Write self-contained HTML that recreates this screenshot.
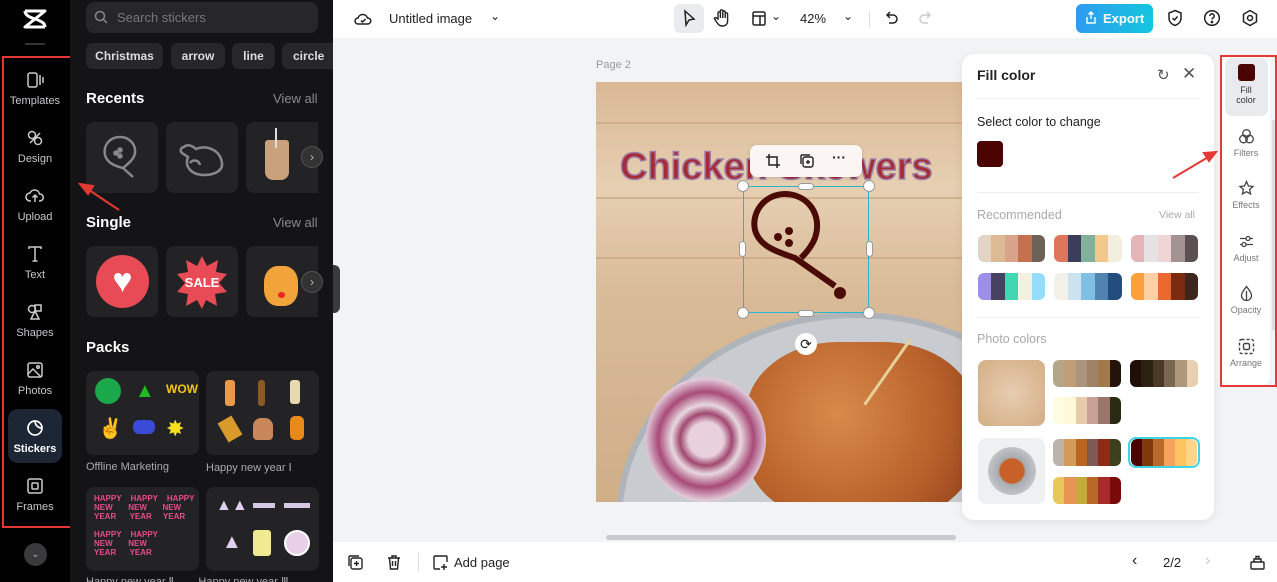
<!DOCTYPE html><html><head><meta charset="utf-8"><style>
*{box-sizing:border-box;margin:0;padding:0}
html{width:1277px;height:582px;overflow:hidden}
body{width:1277px;height:582px;overflow:hidden;position:relative;background:#f1f3f5;font-family:"Liberation Sans",sans-serif}
.abs{position:absolute}
.rail{left:0;top:0;width:70px;height:582px;background:#000}
.ri{position:absolute;left:8px;width:54px;text-align:center;color:#c8c8cc;font-size:11px}
.ri svg{display:block;margin:0 auto 5px}
.panel{left:70px;top:0;width:263px;height:582px;background:#141416;overflow:hidden}
.card{position:absolute;background:#232326;border-radius:8px}
.chip{position:absolute;top:43px;height:26px;background:#27272a;border-radius:7px;color:#ddd;font-size:12px;font-weight:bold;line-height:26px;text-align:center}
.h{position:absolute;color:#fff;font-weight:bold;font-size:15px}
.va{position:absolute;color:#8a8a8e;font-size:13px}
.pal{position:absolute;height:27px;border-radius:6px;overflow:hidden;display:flex}
.pal i{flex:1}
.rr{position:absolute;left:1226px;width:40px;text-align:center;color:#777;font-size:9px;line-height:10px}
.rr svg{display:block;margin:0 auto 3px}
</style></head><body>
<div class="abs rail"></div>
<svg class="abs" style="left:22px;top:8px" width="26" height="22" viewBox="0 0 26 22" fill="none" stroke="#fff" stroke-width="3" stroke-linejoin="round"><path d="M3 3h20L3 19h20M3 3c0 4 4 6 10 8M23 19c0-4-4-6-10-8"/></svg>
<div class="abs" style="left:25px;top:43px;width:20px;height:2px;background:#333"></div>
<div class="abs" style="left:2px;top:56px;width:70px;height:472px;border:2px solid #e53935"></div>
<div class="ri" style="top:70px"><svg width="20" height="20" viewBox="0 0 20 20" fill="none" stroke="#ccc" stroke-width="1.5"><rect x="3" y="3" width="9" height="14" rx="2"/><path d="M15 5v10M18 7v6"/></svg>Templates</div>
<div class="ri" style="top:128px"><svg width="20" height="20" viewBox="0 0 20 20" fill="none" stroke="#ccc" stroke-width="1.5"><circle cx="7" cy="7" r="3.5"/><circle cx="13" cy="13" r="3.5"/><path d="M5 15l10-10"/></svg>Design</div>
<div class="ri" style="top:186px"><svg width="20" height="20" viewBox="0 0 20 20" fill="none" stroke="#ccc" stroke-width="1.5"><path d="M6 15H5a4 4 0 010-8 5 5 0 019.5 1A3.5 3.5 0 0115 15h-1M10 16V9M7.5 11.5L10 9l2.5 2.5"/></svg>Upload</div>
<div class="ri" style="top:244px"><svg width="20" height="20" viewBox="0 0 20 20" fill="none" stroke="#ccc" stroke-width="1.5"><path d="M4 5V3h12v2M10 3v14M7.5 17h5"/></svg>Text</div>
<div class="ri" style="top:302px"><svg width="20" height="20" viewBox="0 0 20 20" fill="none" stroke="#ccc" stroke-width="1.5"><circle cx="7" cy="7" r="3.5"/><rect x="10" y="3" width="6" height="6"/><path d="M10 9l4 8H6z"/></svg>Shapes</div>
<div class="ri" style="top:360px"><svg width="20" height="20" viewBox="0 0 20 20" fill="none" stroke="#ccc" stroke-width="1.5"><rect x="3" y="3" width="14" height="14" rx="2"/><path d="M3 14l5-5 8 8"/><circle cx="13" cy="7" r="1.3"/></svg>Photos</div>
<div class="abs" style="left:8px;top:409px;width:54px;height:54px;border-radius:10px;background:#1c2634"></div>
<div class="ri" style="top:418px;color:#fff;font-weight:bold"><svg width="20" height="20" viewBox="0 0 20 20" fill="none" stroke="#fff" stroke-width="1.7"><path d="M17 10A7 7 0 1110 3c0 4 3 7 7 7zM10 3a7 7 0 017 7"/></svg>Stickers</div>
<div class="ri" style="top:476px"><svg width="20" height="20" viewBox="0 0 20 20" fill="none" stroke="#ccc" stroke-width="1.5"><rect x="3" y="3" width="14" height="14" rx="2"/><rect x="7" y="7" width="6" height="6" rx="1"/></svg>Frames</div>
<div class="abs" style="left:24px;top:543px;width:23px;height:23px;border-radius:50%;background:#3a3a3d;color:#aaa;font-size:10px;text-align:center;line-height:23px">⌄</div>

<div class="abs panel">
<div class="abs" style="left:16px;top:2px;width:232px;height:31px;background:#27272a;border-radius:8px;color:#777;font-size:13px;line-height:31px;padding-left:31px">Search stickers</div>
<svg class="abs" style="left:24px;top:10px" width="14" height="14" viewBox="0 0 14 14" fill="none" stroke="#888" stroke-width="1.5"><circle cx="6" cy="6" r="4.5"/><path d="M9.5 9.5L13 13"/></svg>
<div class="chip" style="left:16px;width:77px">Christmas</div>
<div class="chip" style="left:101px;width:54px">arrow</div>
<div class="chip" style="left:162px;width:43px">line</div>
<div class="chip" style="left:212px;width:51px;border-radius:7px 0 0 7px;text-align:left;padding-left:11px;overflow:hidden">circle</div>
<div class="h" style="left:16px;top:90px">Recents</div><div class="va" style="left:203px;top:91px">View all</div>
<div class="card" style="left:16px;top:122px;width:72px;height:71px"></div>
<div class="card" style="left:96px;top:122px;width:72px;height:71px"></div>
<div class="card" style="left:176px;top:122px;width:72px;height:71px;border-radius:8px 0 0 8px"></div>
<svg class="abs" style="left:28px;top:132px" width="50" height="50" viewBox="0 0 50 50" fill="none" stroke="#888" stroke-width="2.5"><path d="M22 5c-10 0-17 8-15 18 2 8 10 11 18 13l10 9"/><path d="M22 5c9 0 16 7 15 16-1 6-6 10-12 15"/><circle cx="18" cy="21" r="1.5" fill="#888"/><circle cx="22" cy="18" r="1.5" fill="#888"/><circle cx="22" cy="24" r="1.5" fill="#888"/></svg>
<svg class="abs" style="left:106px;top:135px" width="54" height="46" viewBox="0 0 54 46" fill="none" stroke="#888" stroke-width="2.5"><path d="M8 12c4-4 10 0 12 2 10-4 24 0 26 14 1 8-8 12-18 12C16 40 8 32 12 22L6 18c-3-3 0-6 2-6z"/><path d="M14 28c3-4 9-3 10 2"/></svg>
<div class="abs" style="left:195px;top:140px;width:24px;height:40px;background:#c9a27c;border-radius:3px 3px 8px 8px"></div>
<div class="abs" style="left:205px;top:128px;width:2px;height:20px;background:#ddd"></div>
<div class="abs" style="left:231px;top:146px;width:22px;height:22px;border-radius:50%;background:#333;border:1px solid #555;color:#bbb;font-size:12px;text-align:center;line-height:20px">›</div>
<div class="h" style="left:16px;top:214px">Single</div><div class="va" style="left:203px;top:215px">View all</div>
<div class="card" style="left:16px;top:246px;width:72px;height:71px"></div>
<div class="card" style="left:96px;top:246px;width:72px;height:71px"></div>
<div class="card" style="left:176px;top:246px;width:72px;height:71px;border-radius:8px 0 0 8px"></div>
<div class="abs" style="left:26px;top:255px;width:53px;height:53px;border-radius:50%;background:#e84b55;color:#fff;font-size:34px;text-align:center;line-height:53px">♥</div>
<svg class="abs" style="left:106px;top:254px" width="52" height="56" viewBox="0 0 52 56"><polygon points="26,2 31,12 42,6 40,18 51,20 43,29 51,38 39,40 41,52 30,46 26,55 21,46 10,52 12,40 1,38 9,29 1,20 12,18 10,6 21,12" fill="#e84b55"/><text x="26" y="33" fill="#fff" font-size="13" font-weight="bold" text-anchor="middle" font-family="Liberation Sans">SALE</text></svg>
<div class="abs" style="left:194px;top:266px;width:34px;height:40px;border-radius:40%;background:#f2a33a"></div>
<div class="abs" style="left:208px;top:292px;width:7px;height:6px;border-radius:50%;background:#e22"></div>
<div class="abs" style="left:231px;top:271px;width:22px;height:22px;border-radius:50%;background:#333;border:1px solid #555;color:#bbb;font-size:12px;text-align:center;line-height:20px">›</div>
<div class="h" style="left:16px;top:339px">Packs</div>
<div class="card" style="left:16px;top:371px;width:113px;height:84px"></div>
<div class="card" style="left:136px;top:371px;width:113px;height:84px"></div>
<div class="abs" style="left:25px;top:378px;width:26px;height:26px;border-radius:50%;background:#1aa84a"></div>
<div class="abs" style="left:65px;top:380px;color:#2b2;font-size:20px">▲</div>
<div class="abs" style="left:96px;top:382px;color:#f5c518;font-size:12px;font-weight:bold">WOW</div>
<div class="abs" style="left:28px;top:416px;color:#fff;font-size:20px">✌</div>
<div class="abs" style="left:63px;top:420px;width:22px;height:14px;background:#3a4bd8;border-radius:6px"></div>
<div class="abs" style="left:96px;top:416px;color:#f5e020;font-size:22px">✸</div>
<div class="abs" style="left:155px;top:380px;width:10px;height:26px;background:#e89a4a;border-radius:3px"></div>
<div class="abs" style="left:188px;top:380px;width:7px;height:26px;background:#8a5a22;border-radius:3px"></div>
<div class="abs" style="left:220px;top:380px;width:10px;height:24px;background:#e8d8b0;border-radius:3px"></div>
<div class="abs" style="left:152px;top:418px;width:16px;height:22px;background:#d89a2a;transform:rotate(-30deg)"></div>
<div class="abs" style="left:183px;top:418px;width:20px;height:22px;background:#c8865a;border-radius:8px 8px 4px 4px"></div>
<div class="abs" style="left:220px;top:416px;width:14px;height:24px;background:#e8891a;border-radius:5px"></div>
<div class="abs" style="left:16px;top:461px;color:#aaa;font-size:11px">Offline Marketing</div>
<div class="abs" style="left:136px;top:461px;color:#aaa;font-size:11px">Happy new year Ⅰ</div>
<div class="card" style="left:16px;top:487px;width:113px;height:84px"></div>
<div class="card" style="left:136px;top:487px;width:113px;height:84px"></div>
<div class="abs" style="left:24px;top:494px;color:#e84b8a;font-size:8px;font-weight:bold;line-height:9px;width:100px">HAPPY&nbsp;&nbsp;&nbsp;&nbsp;HAPPY&nbsp;&nbsp;&nbsp;&nbsp;HAPPY<br>NEW&nbsp;&nbsp;&nbsp;&nbsp;&nbsp;&nbsp;&nbsp;NEW&nbsp;&nbsp;&nbsp;&nbsp;&nbsp;&nbsp;&nbsp;NEW<br>YEAR&nbsp;&nbsp;&nbsp;&nbsp;&nbsp;&nbsp;YEAR&nbsp;&nbsp;&nbsp;&nbsp;&nbsp;YEAR<br><br>HAPPY&nbsp;&nbsp;&nbsp;&nbsp;HAPPY<br>NEW&nbsp;&nbsp;&nbsp;&nbsp;&nbsp;&nbsp;&nbsp;NEW<br>YEAR&nbsp;&nbsp;&nbsp;&nbsp;&nbsp;&nbsp;YEAR</div>
<div class="abs" style="left:146px;top:497px;color:#e0d0f0;font-size:16px">▲▲</div>
<div class="abs" style="left:183px;top:503px;width:22px;height:5px;background:#d8c8e8"></div>
<div class="abs" style="left:214px;top:503px;width:26px;height:5px;background:#d8c8e8"></div>
<div class="abs" style="left:152px;top:531px;color:#e0d0f0;font-size:20px">▲</div>
<div class="abs" style="left:183px;top:530px;width:18px;height:26px;background:#f2ea90;border-radius:3px"></div>
<div class="abs" style="left:214px;top:530px;width:26px;height:26px;border-radius:50%;background:#e8d0e8;border:2px solid #fff"></div>
<div class="abs" style="left:16px;top:576px;width:240px;height:6px;overflow:hidden;color:#aaa;font-size:11px;line-height:13px">Happy new year Ⅱ&nbsp;&nbsp;&nbsp;&nbsp;&nbsp;&nbsp;&nbsp;&nbsp;Happy new year Ⅲ</div>
</div>
<div class="abs" style="left:333px;top:265px;width:7px;height:48px;background:#3a3a3d;border-radius:0 6px 6px 0"></div>

<!-- top bar -->
<div class="abs" style="left:333px;top:0;width:944px;height:38px;background:#fff"></div>
<svg class="abs" style="left:354px;top:10px" width="18" height="18" viewBox="0 0 18 18" fill="none" stroke="#222" stroke-width="1.5"><path d="M5 14H4a3 3 0 010-6 5 5 0 019.5 0A3 3 0 0114 14H5z"/><path d="M7 10.5l1.5 1.5 3-3"/></svg>
<div class="abs" style="left:389px;top:11px;font-size:13px;color:#222">Untitled image</div>
<div class="abs" style="left:490px;top:9px;font-size:12px;color:#222">⌄</div>
<div class="abs" style="left:674px;top:4px;width:30px;height:29px;border-radius:6px;background:#e9ebee"></div>
<svg class="abs" style="left:681px;top:9px" width="16" height="18" viewBox="0 0 16 18" fill="none" stroke="#222" stroke-width="1.5"><path d="M4 2l9 8-5 1-3 5z"/></svg>
<svg class="abs" style="left:713px;top:8px" width="18" height="20" viewBox="0 0 18 20" fill="none" stroke="#222" stroke-width="1.4"><path d="M5 11V5a1.2 1.2 0 012.4 0v5V3a1.2 1.2 0 012.4 0v7V4a1.2 1.2 0 012.4 0v6V6a1.2 1.2 0 012.4 0v7c0 3-2 5-5 5s-4-1-6-4l-2-3c-.6-1 .8-2 1.6-1z"/></svg>
<svg class="abs" style="left:751px;top:10px" width="16" height="17" viewBox="0 0 16 17" fill="none" stroke="#222" stroke-width="1.5"><rect x="2" y="2" width="12" height="13" rx="1.5"/><path d="M2 6h12M9 6v9"/></svg>
<div class="abs" style="left:771px;top:9px;font-size:12px;color:#222">⌄</div>
<div class="abs" style="left:800px;top:11px;font-size:13px;color:#222">42%</div>
<div class="abs" style="left:843px;top:9px;font-size:12px;color:#222">⌄</div>
<div class="abs" style="left:869px;top:11px;width:1px;height:16px;background:#ddd"></div>
<svg class="abs" style="left:884px;top:10px" width="16" height="17" viewBox="0 0 16 17" fill="none" stroke="#222" stroke-width="1.5"><path d="M6 2L3 5l3 3M3 5h6a4 4 0 010 8H5"/></svg>
<svg class="abs" style="left:917px;top:10px" width="16" height="17" viewBox="0 0 16 17" fill="none" stroke="#ccc" stroke-width="1.5"><path d="M10 2l3 3-3 3M13 5H7a4 4 0 000 8h4"/></svg>
<div class="abs" style="left:1076px;top:4px;width:77px;height:29px;border-radius:6px;background:linear-gradient(90deg,#2e9bef,#14c6df);color:#fff;font-size:13px;font-weight:bold;line-height:29px;padding-left:27px">Export</div>
<svg class="abs" style="left:1085px;top:11px" width="12" height="14" viewBox="0 0 12 14" fill="none" stroke="#fff" stroke-width="1.4"><path d="M6 1v7M3.5 3.5L6 1l2.5 2.5M2 6v6h8V6"/></svg>
<svg class="abs" style="left:1167px;top:9px" width="16" height="18" viewBox="0 0 16 18" fill="none" stroke="#222" stroke-width="1.5"><path d="M8 1.5l6 2.5v5c0 4-3 6.5-6 7.5-3-1-6-3.5-6-7.5V4z"/><path d="M5.5 9l2 2 3-3.5"/></svg>
<svg class="abs" style="left:1203px;top:9px" width="18" height="18" viewBox="0 0 18 18" fill="none" stroke="#222" stroke-width="1.5"><circle cx="9" cy="9" r="7.3"/><path d="M6.8 7a2.2 2.2 0 114 1.3c-.8.6-1.8 1-1.8 2.2"/><circle cx="9" cy="13" r=".6" fill="#222"/></svg>
<svg class="abs" style="left:1241px;top:9px" width="18" height="18" viewBox="0 0 18 18" fill="none" stroke="#222" stroke-width="1.5"><path d="M9 1.5l6.5 3.75v7.5L9 16.5l-6.5-3.75v-7.5z"/><circle cx="9" cy="9" r="2.5"/></svg>

<!-- canvas -->
<div class="abs" style="left:596px;top:59px;font-size:11px;color:#999">Page 2</div>
<div class="abs" style="left:596px;top:82px;width:370px;height:420px;overflow:hidden;background:linear-gradient(180deg,#d9b894 0%,#e6cfb2 25%,#d9bb98 50%,#cfae88 100%)">
 <div class="abs" style="left:0;top:40px;width:370px;height:2px;background:#c9a37c;opacity:.6"></div>
 <div class="abs" style="left:0;top:115px;width:370px;height:2px;background:#c29a70;opacity:.5"></div>
 <div class="abs" style="left:0;top:175px;width:370px;height:2px;background:#c29a70;opacity:.5"></div>
 <div class="abs" style="left:20px;top:230px;width:480px;height:420px;border-radius:50%;background:#c8ccd0;border:6px solid #aeb4ba"></div>
 <div class="abs" style="left:150px;top:260px;width:230px;height:180px;border-radius:40%;background:radial-gradient(circle at 40% 40%,#d88a4a,#b8602a 60%,#8a3a1a)"></div>
 <div class="abs" style="left:50px;top:295px;width:120px;height:125px;border-radius:50%;background:radial-gradient(circle,#e8d0dc 20%,#a04870 30%,#e8d8e0 40%,#a84a78 55%,#e0c8d8 70%)"></div>
 <div class="abs" style="left:290px;top:250px;width:3px;height:80px;background:#e6d098;transform:rotate(35deg)"></div>
 <div class="abs" style="left:24px;top:64px;font-size:38px;font-weight:bold;color:#a82a35;-webkit-text-stroke:1.5px #9c7ea8;white-space:nowrap">Chicken Skewers</div>
</div>
<div class="abs" style="left:743px;top:186px;width:126px;height:127px;border:1.5px solid #22b8cf"></div>
<svg class="abs" style="left:745px;top:190px" width="120" height="120" viewBox="0 0 120 120" fill="none" stroke="#4a0a05" stroke-width="6"><path d="M40 4C20 4 6 22 10 40c4 16 22 22 40 28l40 28"/><path d="M40 4c22 0 38 20 30 44-3 8-8 14-14 20"/><circle cx="33" cy="47" r="4" fill="#4a0a05" stroke="none"/><circle cx="44" cy="41" r="4" fill="#4a0a05" stroke="none"/><circle cx="44" cy="53" r="4" fill="#4a0a05" stroke="none"/><circle cx="95" cy="103" r="6" fill="#4a0a05" stroke="none"/></svg>
<div class="abs" style="left:737px;top:180px;width:12px;height:12px;border-radius:50%;background:#fff;border:1px solid #999"></div>
<div class="abs" style="left:863px;top:180px;width:12px;height:12px;border-radius:50%;background:#fff;border:1px solid #999"></div>
<div class="abs" style="left:737px;top:307px;width:12px;height:12px;border-radius:50%;background:#fff;border:1px solid #999"></div>
<div class="abs" style="left:863px;top:307px;width:12px;height:12px;border-radius:50%;background:#fff;border:1px solid #999"></div>
<div class="abs" style="left:798px;top:183px;width:16px;height:7px;border-radius:4px;background:#fff;border:1px solid #999"></div>
<div class="abs" style="left:798px;top:310px;width:16px;height:7px;border-radius:4px;background:#fff;border:1px solid #999"></div>
<div class="abs" style="left:739px;top:241px;width:7px;height:16px;border-radius:4px;background:#fff;border:1px solid #999"></div>
<div class="abs" style="left:866px;top:241px;width:7px;height:16px;border-radius:4px;background:#fff;border:1px solid #999"></div>
<div class="abs" style="left:795px;top:333px;width:22px;height:22px;border-radius:50%;background:#fff;color:#222;font-size:14px;text-align:center;line-height:22px">⟳</div>
<div class="abs" style="left:750px;top:145px;width:112px;height:32px;border-radius:7px;background:#fbf6f4;box-shadow:0 1px 4px rgba(0,0,0,.15)"></div>
<svg class="abs" style="left:765px;top:153px" width="16" height="16" viewBox="0 0 16 16" fill="none" stroke="#222" stroke-width="1.5"><path d="M4 1v11h11M1 4h11v11"/></svg>
<svg class="abs" style="left:799px;top:153px" width="16" height="16" viewBox="0 0 16 16" fill="none" stroke="#222" stroke-width="1.4"><rect x="4" y="4" width="10" height="10" rx="2"/><path d="M2 11V3a1 1 0 011-1h8M9 7v4M7 9h4"/></svg>
<div class="abs" style="left:832px;top:149px;font-size:14px;font-weight:bold;color:#222">···</div>

<!-- fill color panel -->
<div class="abs" style="left:962px;top:54px;width:252px;height:466px;background:#fff;border-radius:12px;box-shadow:0 2px 10px rgba(0,0,0,.08)"></div>
<div class="abs" style="left:977px;top:67px;font-size:14px;font-weight:bold;color:#222">Fill color</div>
<div class="abs" style="left:1157px;top:66px;font-size:15px;color:#555">↻</div>
<div class="abs" style="left:1182px;top:64px;font-size:17px;color:#555">✕</div>
<div class="abs" style="left:977px;top:98px;width:222px;height:1px;background:#eee"></div>
<div class="abs" style="left:977px;top:115px;font-size:12.5px;color:#222">Select color to change</div>
<div class="abs" style="left:977px;top:141px;width:26px;height:26px;border-radius:4px;background:#4a0503"></div>
<div class="abs" style="left:977px;top:192px;width:222px;height:1px;background:#eee"></div>
<div class="abs" style="left:977px;top:208px;font-size:12.5px;color:#aaa">Recommended</div>
<div class="abs" style="left:1159px;top:209px;font-size:10.5px;color:#aaa">View all</div>
<div class="pal" style="left:978px;top:235px;width:67px"><i style="background:#e3d3c3"></i><i style="background:#dcbb94"></i><i style="background:#d9a38b"></i><i style="background:#c5714f"></i><i style="background:#6e6158"></i></div>
<div class="pal" style="left:1054px;top:235px;width:68px"><i style="background:#df765c"></i><i style="background:#3b3d5b"></i><i style="background:#81b09b"></i><i style="background:#f1c98d"></i><i style="background:#f2efde"></i></div>
<div class="pal" style="left:1131px;top:235px;width:67px"><i style="background:#e5b4b6"></i><i style="background:#e6e2e4"></i><i style="background:#efd5d3"></i><i style="background:#a39392"></i><i style="background:#5c5052"></i></div>
<div class="pal" style="left:978px;top:273px;width:67px"><i style="background:#9d8ee8"></i><i style="background:#474262"></i><i style="background:#41d7b0"></i><i style="background:#f3f0e0"></i><i style="background:#96dcfd"></i></div>
<div class="pal" style="left:1054px;top:273px;width:68px"><i style="background:#f3f0ea"></i><i style="background:#cce2ee"></i><i style="background:#7fbfe3"></i><i style="background:#5283b0"></i><i style="background:#234d7d"></i></div>
<div class="pal" style="left:1131px;top:273px;width:67px"><i style="background:#fba03a"></i><i style="background:#fccfa5"></i><i style="background:#e9692f"></i><i style="background:#7d2b10"></i><i style="background:#3d261c"></i></div>
<div class="abs" style="left:977px;top:317px;width:222px;height:1px;background:#eee"></div>
<div class="abs" style="left:977px;top:332px;font-size:12.5px;color:#aaa">Photo colors</div>
<div class="abs" style="left:978px;top:360px;width:67px;height:66px;border-radius:8px;background:radial-gradient(circle,#e6cdb0,#d4ad84)"></div>
<div class="pal" style="left:1053px;top:360px;width:68px"><i style="background:#b3a787"></i><i style="background:#c19e77"></i><i style="background:#ab957d"></i><i style="background:#9e8166"></i><i style="background:#a07a4b"></i><i style="background:#231308"></i></div>
<div class="pal" style="left:1130px;top:360px;width:68px"><i style="background:#200f08"></i><i style="background:#2c2212"></i><i style="background:#4a3926"></i><i style="background:#786650"></i><i style="background:#ae987c"></i><i style="background:#e8cfb1"></i></div>
<div class="pal" style="left:1053px;top:397px;width:68px"><i style="background:#fffbe0"></i><i style="background:#fff8d8"></i><i style="background:#e7cbac"></i><i style="background:#c9a096"></i><i style="background:#9a766d"></i><i style="background:#282a12"></i></div>
<div class="abs" style="left:978px;top:438px;width:67px;height:66px;border-radius:8px;background:#eef0f2"></div>
<div class="abs" style="left:988px;top:447px;width:48px;height:48px;border-radius:50%;background:radial-gradient(circle,#c8602a 35%,#a8acb0 40%,#c0c4c8 70%)"></div>
<div class="pal" style="left:1053px;top:439px;width:68px"><i style="background:#bcb3ab"></i><i style="background:#d39a5a"></i><i style="background:#ba6522"></i><i style="background:#7e5a55"></i><i style="background:#8f2a17"></i><i style="background:#3e3f1e"></i></div>
<div class="abs" style="left:1128px;top:437px;width:72px;height:31px;border-radius:8px;border:2px solid #3fd3e6"></div>
<div class="pal" style="left:1131px;top:439px;width:66px"><i style="background:#4a0503"></i><i style="background:#7f3a0c"></i><i style="background:#b9692a"></i><i style="background:#f5a25c"></i><i style="background:#fec260"></i><i style="background:#fed68a"></i></div>
<div class="pal" style="left:1053px;top:477px;width:68px"><i style="background:#e8c85a"></i><i style="background:#e69552"></i><i style="background:#c3aa3a"></i><i style="background:#b8692a"></i><i style="background:#a82a2a"></i><i style="background:#7a0a0a"></i></div>

<!-- right rail -->
<div class="abs" style="left:1222px;top:57px;width:48px;height:328px;background:#fff;border-radius:8px"></div>
<div class="abs" style="left:1220px;top:55px;width:57px;height:332px;border:2px solid #e53935"></div>
<div class="abs" style="left:1225px;top:58px;width:43px;height:58px;border-radius:7px;background:#e8eaed"></div>
<div class="rr" style="top:64px;color:#333"><div style="width:17px;height:17px;margin:0 auto 4px;border-radius:3px;background:#4a0503"></div>Fill<br>color</div>
<div class="rr" style="top:128px"><svg width="17" height="17" viewBox="0 0 17 17" fill="none" stroke="#444" stroke-width="1.3"><circle cx="8.5" cy="5.5" r="3.8"/><circle cx="5.5" cy="11" r="3.8"/><circle cx="11.5" cy="11" r="3.8"/></svg>Filters</div>
<div class="rr" style="top:180px"><svg width="17" height="17" viewBox="0 0 17 17" fill="none" stroke="#444" stroke-width="1.3"><path d="M8.5 1.5l2 4.5 4.5.5-3.4 3 1 4.5-4.1-2.3-4.1 2.3 1-4.5-3.4-3 4.5-.5z"/></svg>Effects</div>
<div class="rr" style="top:233px"><svg width="17" height="17" viewBox="0 0 17 17" fill="none" stroke="#444" stroke-width="1.3"><path d="M2 5.5h13M2 11.5h13"/><circle cx="10" cy="5.5" r="2" fill="#fff"/><circle cx="6" cy="11.5" r="2" fill="#fff"/></svg>Adjust</div>
<div class="rr" style="top:285px"><svg width="17" height="17" viewBox="0 0 17 17" fill="none" stroke="#444" stroke-width="1.3"><path d="M8.5 1.5C6 5 3.5 7.5 3.5 10.5a5 5 0 0010 0c0-3-2.5-5.5-5-9z"/><path d="M8.5 6v9"/></svg>Opacity</div>
<div class="rr" style="top:338px"><svg width="17" height="17" viewBox="0 0 17 17" fill="none" stroke="#444" stroke-width="1.4" stroke-dasharray="3 2"><rect x="1.5" y="1.5" width="14" height="14" rx="2"/><rect x="5.5" y="5.5" width="6" height="6" rx="1.5" stroke-dasharray="none"/></svg>Arrange</div>
<div class="abs" style="left:1272px;top:120px;width:3px;height:210px;background:#ddd"></div>

<!-- arrows -->
<svg class="abs" style="left:0;top:0" width="1277" height="582"><g stroke="#e53935" stroke-width="2" fill="#e53935"><line x1="119" y1="210" x2="86" y2="188"/><polygon points="80,184 93,186 88,194"/><line x1="1173" y1="178" x2="1210" y2="156"/><polygon points="1216,152 1204,153 1209,161"/></g></svg>

<!-- bottom bar -->
<div class="abs" style="left:606px;top:535px;width:350px;height:5px;border-radius:3px;background:#c8cacd"></div>
<div class="abs" style="left:333px;top:542px;width:944px;height:40px;background:#fff"></div>
<svg class="abs" style="left:347px;top:554px" width="17" height="17" viewBox="0 0 17 17" fill="none" stroke="#222" stroke-width="1.4"><rect x="4" y="4" width="11" height="11" rx="2"/><path d="M2 12V3a1 1 0 011-1h9M9.5 7v5M7 9.5h5"/></svg>
<svg class="abs" style="left:386px;top:554px" width="16" height="17" viewBox="0 0 16 17" fill="none" stroke="#222" stroke-width="1.4"><path d="M2 4h12M6 4V2h4v2M3.5 4l1 11h7l1-11M6.5 7v5M9.5 7v5"/></svg>
<div class="abs" style="left:418px;top:553px;width:1px;height:18px;background:#ddd"></div>
<svg class="abs" style="left:432px;top:554px" width="17" height="17" viewBox="0 0 17 17" fill="none" stroke="#222" stroke-width="1.4"><path d="M8 15H3a1 1 0 01-1-1V3a1 1 0 011-1h11a1 1 0 011 1v5M12 10v6M9 13h6"/></svg>
<div class="abs" style="left:454px;top:555px;font-size:13px;color:#222">Add page</div>
<div class="abs" style="left:1132px;top:552px;font-size:16px;color:#222">‹</div>
<div class="abs" style="left:1163px;top:555px;font-size:13px;color:#222">2/2</div>
<div class="abs" style="left:1205px;top:552px;font-size:16px;color:#ccc">›</div>
<svg class="abs" style="left:1249px;top:554px" width="17" height="17" viewBox="0 0 17 17" fill="none" stroke="#222" stroke-width="1.4"><rect x="2" y="8" width="13" height="7" rx="1"/><path d="M5 8V5h7v3M7 5V2.5h3V5"/></svg>
</body></html>
